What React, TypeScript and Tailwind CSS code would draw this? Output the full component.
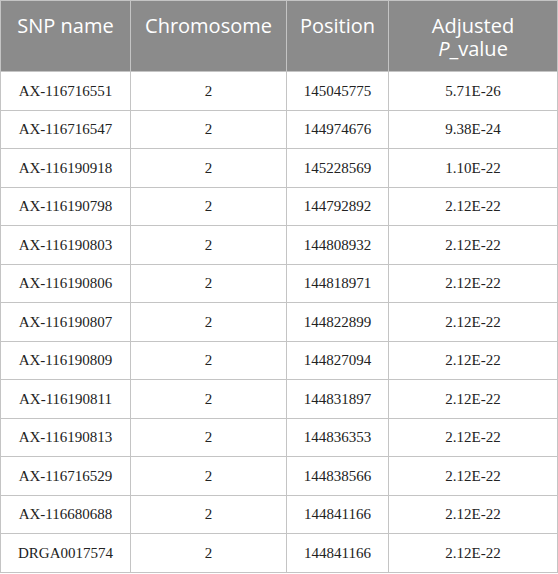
const rows = [
  ['AX-116716551', '2', '145045775', '5.71E-26'],
  ['AX-116716547', '2', '144974676', '9.38E-24'],
  ['AX-116190918', '2', '145228569', '1.10E-22'],
  ['AX-116190798', '2', '144792892', '2.12E-22'],
  ['AX-116190803', '2', '144808932', '2.12E-22'],
  ['AX-116190806', '2', '144818971', '2.12E-22'],
  ['AX-116190807', '2', '144822899', '2.12E-22'],
  ['AX-116190809', '2', '144827094', '2.12E-22'],
  ['AX-116190811', '2', '144831897', '2.12E-22'],
  ['AX-116190813', '2', '144836353', '2.12E-22'],
  ['AX-116716529', '2', '144838566', '2.12E-22'],
  ['AX-116680688', '2', '144841166', '2.12E-22'],
  ['DRGA0017574', '2', '144841166', '2.12E-22'],
];

const App = () => {
  return (
    <div className="w-[558px] h-[574px] bg-white">
      <table className="w-[558px] border-collapse table-fixed">
        <colgroup>
          <col className="w-[130px]" />
          <col className="w-[156px]" />
          <col className="w-[102px]" />
          <col />
        </colgroup>
        <thead>
          <tr className="h-[71px] bg-[#8b8b8b] text-white font-['Open_Sans',sans-serif] text-[20px] leading-[23px]">
            <th className="align-top pt-[13px] font-normal border border-[#c4c4c4]">SNP name</th>
            <th className="align-top pt-[13px] font-normal border border-[#c4c4c4]">Chromosome</th>
            <th className="align-top pt-[13px] font-normal border border-[#c4c4c4]">Position</th>
            <th className="align-top pt-[13px] font-normal border border-[#c4c4c4]">
              Adjusted
              <br />
              <i>P</i>_value
            </th>
          </tr>
        </thead>
        <tbody className="font-['Liberation_Serif',serif] text-[15px] text-[#222]">
          {rows.map((r) => (
            <tr key={r[0]} className="h-[38.5px]">
              {r.map((c, i) => (
                <td key={i} className="text-center align-middle border border-[#c4c4c4]">
                  {c}
                </td>
              ))}
            </tr>
          ))}
        </tbody>
      </table>
    </div>
  );
};

export default App;
